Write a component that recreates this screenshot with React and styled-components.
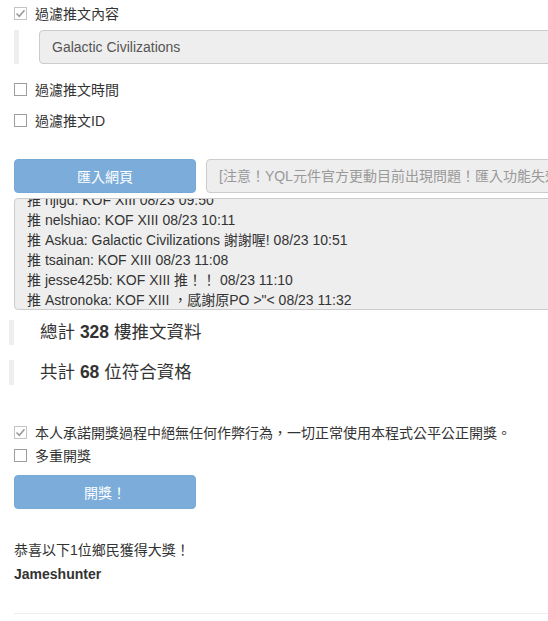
import { useEffect, useRef } from "react";
import styled, { createGlobalStyle } from "styled-components";

const GlobalStyle = createGlobalStyle`
  html, body {
    margin: 0;
    overflow: hidden;
    background: #fff;
  }
  body {
    font-family: "Liberation Sans", Arial, "Noto Sans CJK TC", sans-serif;
    font-size: 14px;
    color: #333;
  }
`;

const pushes = [
  "推 kuma0412: KOF XIII 08/23 09:21",
  "推 bluewind: KOF XIII 08/23 09:33",
  "推 raidenx: Galactic Civilizations 08/23 09:41",
  "推 njlgd: KOF XIII 08/23 09:50",
  "推 nelshiao: KOF XIII 08/23 10:11",
  "推 Askua: Galactic Civilizations 謝謝喔! 08/23 10:51",
  "推 tsainan: KOF XIII 08/23 11:08",
  "推 jesse425b: KOF XIII 推！！ 08/23 11:10",
  "推 Astronoka: KOF XIII ，感謝原PO >\"< 08/23 11:32",
  "推 Jameshunter: Galactic Civilizations 08/23 11:40",
  "推 lucky77: KOF XIII 08/23 11:52",
  "推 ohmygod: KOF XIII 08/23 12:03",
];

const Page = styled.div`
  width: 760px;
  padding: 3px 0 0 14px;
`;

const CheckRow = styled.label`
  display: flex;
  align-items: center;
  gap: 8px;
  height: 20px;
  margin-top: ${({ $top }) => $top}px;
  white-space: nowrap;
`;

const Box = styled.span`
  box-sizing: border-box;
  width: 13px;
  height: 13px;
  border: 1px solid ${({ $checked }) => ($checked ? "#c4c4c4" : "#9d9d9d")};
  background: #fff;
  display: flex;
  align-items: center;
  justify-content: center;
  flex-shrink: 0;
`;

const Quote = styled.div`
  margin-top: 7px;
  border-left: 5px solid #eee;
  padding-left: 20px;
`;

const Field = styled.input`
  box-sizing: border-box;
  display: block;
  width: 100%;
  height: 34px;
  margin: 0;
  padding: 0 12px;
  border: 1px solid #ccc;
  border-radius: 4px;
  background: #eee;
  color: #555;
  font: inherit;
  outline: none;

  &::placeholder {
    color: #999;
  }
`;

const ImportRow = styled.div`
  display: flex;
  gap: 10px;
  margin-top: 29px;
`;

const Button = styled.button`
  box-sizing: border-box;
  width: 182px;
  height: 34px;
  flex-shrink: 0;
  margin-top: ${({ $top }) => $top || 0}px;
  padding: 0;
  border: 1px solid #78a9d6;
  border-radius: 4px;
  background: #7cadda;
  color: #fff;
  font: inherit;
  display: block;
`;

const Log = styled.textarea`
  box-sizing: border-box;
  display: block;
  width: 100%;
  height: 112px;
  margin: 5px 0 0;
  padding: 6px 12px;
  border: 1px solid #ccc;
  border-radius: 4px;
  background: #eee;
  color: #333;
  font: inherit;
  line-height: 20px;
  resize: none;
  outline: none;
  white-space: pre;
  overflow: hidden;
`;

const Stat = styled.div`
  margin: ${({ $top }) => $top}px 0 0 -5px;
  border-left: 5px solid #eee;
  padding-left: 26px;
  font-size: 17.5px;
  line-height: 25px;
  height: 25px;
`;

const Line = styled.div`
  margin-top: ${({ $top }) => $top}px;
  line-height: 20px;
  font-weight: ${({ $bold }) => ($bold ? 700 : 400)};
`;

const Rule = styled.hr`
  margin: 29px 0 0;
  border: 0;
  border-top: 1px solid #eee;
`;

function Check({ checked, label, top }) {
  return (
    <CheckRow $top={top}>
      <Box $checked={checked}>
        {checked && (
          <svg width="11" height="11" viewBox="0 0 11 11">
            <path d="M1.5 5.5 L4.3 8.3 L9.5 2.2" fill="none" stroke="#9a9a9a" strokeWidth="1.6" />
          </svg>
        )}
      </Box>
      {label}
    </CheckRow>
  );
}

export default function App() {
  const logRef = useRef(null);

  useEffect(() => {
    if (logRef.current) logRef.current.scrollTop = 75;
  }, []);

  return (
    <Page>
      <GlobalStyle />
      <Check checked label="過濾推文內容" top={0} />
      <Quote>
        <Field readOnly value="Galactic Civilizations" />
      </Quote>
      <Check label="過濾推文時間" top={15} />
      <Check label="過濾推文ID" top={11} />

      <ImportRow>
        <Button>匯入網頁</Button>
        <Field readOnly placeholder="[注意！YQL元件官方更動目前出現問題！匯入功能失效，請手動貼上推文]" />
      </ImportRow>
      <Log ref={logRef} readOnly value={pushes.join("\n")} />

      <Stat $top={10}>
        總計 <b>328</b> 樓推文資料
      </Stat>
      <Stat $top={15}>
        共計 <b>68</b> 位符合資格
      </Stat>

      <Check checked label="本人承諾開獎過程中絕無任何作弊行為，一切正常使用本程式公平公正開獎。" top={37} />
      <Check label="多重開獎" top={3} />
      <Button $top={10}>開獎！</Button>

      <Line $top={31}>恭喜以下1位鄉民獲得大獎！</Line>
      <Line $top={4} $bold>
        Jameshunter
      </Line>
      <Rule />
    </Page>
  );
}
